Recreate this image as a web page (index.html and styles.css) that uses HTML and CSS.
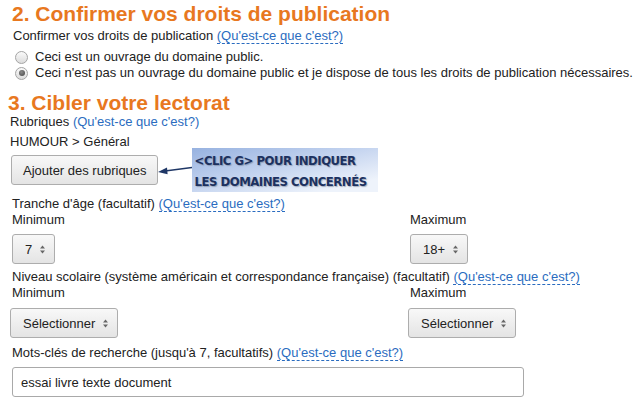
FILE: index.html
```html
<!DOCTYPE html>
<html lang="fr">
<head>
  <meta charset="UTF-8">
  <title>Publication</title>
  <link rel="stylesheet" href="styles.css">
</head>
<body>
  <div class="page">
    <!-- Section 2 -->
    <section class="step step-rights">
      <h2 class="step-title">2. Confirmer vos droits de publication</h2>
      <p class="line">Confirmer vos droits de publication <a class="help dashed" href="#">(Qu'est-ce que c'est?)</a></p>
      <div class="radios">
        <label class="radio-row"><input type="radio" name="rights"> Ceci est un ouvrage du domaine public.</label>
        <label class="radio-row"><input type="radio" name="rights" checked> Ceci n'est pas un ouvrage du domaine public et je dispose de tous les droits de publication nécessaires.</label>
      </div>
    </section>

    <!-- Section 3 -->
    <section class="step step-audience">
      <h2 class="step-title">3. Cibler votre lectorat</h2>
      <p class="line">Rubriques <a class="help" href="#">(Qu'est-ce que c'est?)</a></p>
      <p class="line category">HUMOUR &gt; Général</p>

      <div class="category-row">
        <button class="btn">Ajouter des rubriques</button>
        <svg class="arrow" width="34" height="10" viewBox="0 0 34 10">
          <line x1="34" y1="2.5" x2="7" y2="6" stroke="#1f3766" stroke-width="1.4"/>
          <polygon points="0,7 9,2.6 9.6,9.2" fill="#1f3766"/>
        </svg>
        <div class="callout">&lt;CLIC G&gt; POUR INDIQUER<br>LES DOMAINES CONCERNÉS</div>
      </div>

      <div class="field field-age">
        <p class="line">Tranche d'âge (facultatif) <a class="help dashed" href="#">(Qu'est-ce que c'est?)</a></p>
        <div class="range">
          <div class="range-col">
            <p class="line">Minimum</p>
            <div class="select"><span>7</span><svg class="chev" width="5" height="9" viewBox="0 0 5 9"><polygon points="0,3.5 2.5,0.5 5,3.5"/><polygon points="0,5.5 2.5,8.5 5,5.5"/></svg></div>
          </div>
          <div class="range-col">
            <p class="line">Maximum</p>
            <div class="select"><span>18+</span><svg class="chev" width="5" height="9" viewBox="0 0 5 9"><polygon points="0,3.5 2.5,0.5 5,3.5"/><polygon points="0,5.5 2.5,8.5 5,5.5"/></svg></div>
          </div>
        </div>
      </div>

      <div class="field field-grade">
        <p class="line">Niveau scolaire (système américain et correspondance française) (facultatif) <a class="help dashed" href="#">(Qu'est-ce que c'est?)</a></p>
        <div class="range">
          <div class="range-col">
            <p class="line">Minimum</p>
            <div class="select"><span>Sélectionner</span><svg class="chev" width="5" height="9" viewBox="0 0 5 9"><polygon points="0,3.5 2.5,0.5 5,3.5"/><polygon points="0,5.5 2.5,8.5 5,5.5"/></svg></div>
          </div>
          <div class="range-col">
            <p class="line">Maximum</p>
            <div class="select"><span>Sélectionner</span><svg class="chev" width="5" height="9" viewBox="0 0 5 9"><polygon points="0,3.5 2.5,0.5 5,3.5"/><polygon points="0,5.5 2.5,8.5 5,5.5"/></svg></div>
          </div>
        </div>
      </div>

      <div class="field field-keywords">
        <p class="line">Mots-clés de recherche (jusqu'à 7, facultatifs) <a class="help dashed" href="#">(Qu'est-ce que c'est?)</a></p>
        <input class="text-input" type="text" value="essai livre texte document">
      </div>
    </section>
  </div>
</body>
</html>
```

FILE: styles.css
```css
* {
  margin: 0;
  padding: 0;
  box-sizing: border-box;
}
body {
  background: #fff;
  font-family: "Liberation Sans", Arial, sans-serif;
  font-size: 13px;
  color: #222;
}
.page {
  padding-left: 10px;
}
.line {
  line-height: 16px;
}
/* Headings */
.step-title {
  font-size: 21px;
  line-height: 22px;
  font-weight: bold;
  color: #e8781f;
}
.step-rights .step-title {
  margin: 3px 0 0 2px;
}
.step-rights > .line {
  margin: 3px 0 0 3px;
}
.step-audience .step-title {
  margin: 11px 0 0 -2px;
}
/* Links */
.help {
  color: #2a6cc0;
  text-decoration: none;
}
.help.dashed {
  border-bottom: 1px dashed #2a6cc0;
}
/* Radios */
.radios {
  margin: 5px 0 0 5px;
}
.radio-row {
  display: flex;
  align-items: center;
  gap: 7px;
  line-height: 16px;
}
.radio-row input {
  appearance: none;
  width: 13px;
  height: 13px;
  border: 1px solid #a4a4a4;
  border-radius: 50%;
  background: linear-gradient(#fafafa, #dcdcdc);
  position: relative;
}
.radio-row input:checked::after {
  content: "";
  position: absolute;
  left: 2.5px;
  top: 2.5px;
  width: 6px;
  height: 6px;
  border-radius: 50%;
  background: radial-gradient(circle at 40% 35%, #8a8a8a, #444);
}
/* Categories */
.category {
  margin-top: 4px;
}
.category-row {
  display: flex;
  align-items: center;
  height: 30px;
  margin: 5px 0 0 1px;
}
.btn {
  height: 30px;
  padding: 0 10px 0 11px;
  font: inherit;
  color: #222;
  border: 1px solid #adadad;
  border-radius: 3px;
  background: linear-gradient(#f8f8f8, #e4e4e4);
}
.arrow {
  display: block;
}
.callout {
  width: 186px;
  height: 44px;
  margin: -7px 0;
  padding: 2px 0 0 3px;
  white-space: nowrap;
  font-family: "DejaVu Sans Condensed", "DejaVu Sans", sans-serif;
  font-weight: bold;
  font-size: 13px;
  line-height: 21px;
  letter-spacing: -0.5px;
  color: #1c3160;
  text-shadow: 1px 1px 1px rgba(110, 120, 140, 0.55);
  background: linear-gradient(to bottom right, #97b2e0 0%, #c3d3ef 45%, #eef3fb 85%);
}
/* Fields */
.field-age {
  margin: 11px 0 0 2px;
}
.field-grade {
  margin: 5px 0 0 2px;
}
.field-keywords {
  margin: 7px 0 0 2px;
}
.range {
  display: grid;
  grid-template-columns: 398px auto;
}
.range .select {
  margin-top: 6px;
}
.field-grade .range .select {
  margin-top: 7px;
  margin-left: -2px;
}
.select {
  display: inline-flex;
  align-items: center;
  gap: 8px;
  height: 30px;
  padding: 0 9px 0 12px;
  border: 1px solid #adadad;
  border-radius: 3px;
  background: linear-gradient(#f8f8f8, #e4e4e4);
}
.chev {
  display: block;
  fill: #666;
}
.text-input {
  display: block;
  margin-top: 6px;
  width: 512px;
  height: 30px;
  padding: 0 8px;
  font: inherit;
  color: #222;
  border: 1px solid #a9a9a9;
  border-radius: 3px;
  outline: none;
}
```
